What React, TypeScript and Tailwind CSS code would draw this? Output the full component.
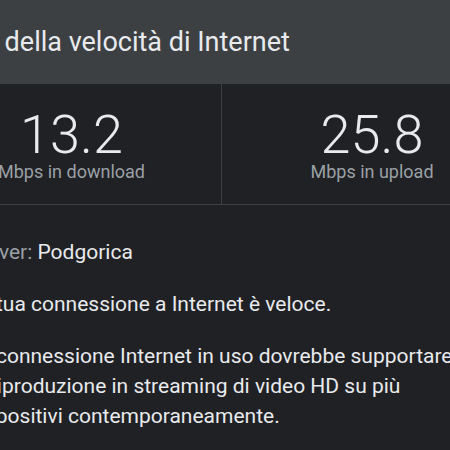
const App = () => {
  return (
    <div
      className="w-[450px] h-[450px] overflow-hidden bg-[#202124] text-[#e8eaed]"
      style={{ fontFamily: "Roboto, 'Noto Sans', sans-serif" }}
    >
      <div className="-ml-[78px] w-[600px]">
        {/* Header */}
        <header className="h-[84px] bg-[#3c4043] flex items-center pl-[24px]">
          <h1 className="text-[27px] font-normal whitespace-nowrap">
            Test della velocità di Internet
          </h1>
        </header>

        {/* Results */}
        <div className="grid grid-cols-2 border-b border-[#3c4043]">
          <div className="h-[120px] flex flex-col items-center pt-[26px] border-r border-[#3c4043]">
            <span className="text-[54px] leading-[50px] font-light">13.2</span>
            <span className="text-[18px] leading-[24px] text-[#9aa0a6]">Mbps in download</span>
          </div>
          <div className="h-[120px] flex flex-col items-center pt-[26px]">
            <span className="text-[54px] leading-[50px] font-light">25.8</span>
            <span className="text-[18px] leading-[24px] text-[#9aa0a6]">Mbps in upload</span>
          </div>
        </div>

        {/* Details */}
        <div className="pl-[46px] pr-[48px] pt-[32px] flex flex-col gap-[22px] text-[21px] leading-[30px]">
          <p>
            <span className="text-[#9aa0a6]">Server: </span>
            Podgorica
          </p>
          <p>La tua connessione a Internet è veloce.</p>
          <p>
            La connessione Internet in uso dovrebbe supportare la riproduzione in
            streaming di video HD su più dispositivi contemporaneamente.
          </p>
        </div>
      </div>
    </div>
  );
};

export default App;
